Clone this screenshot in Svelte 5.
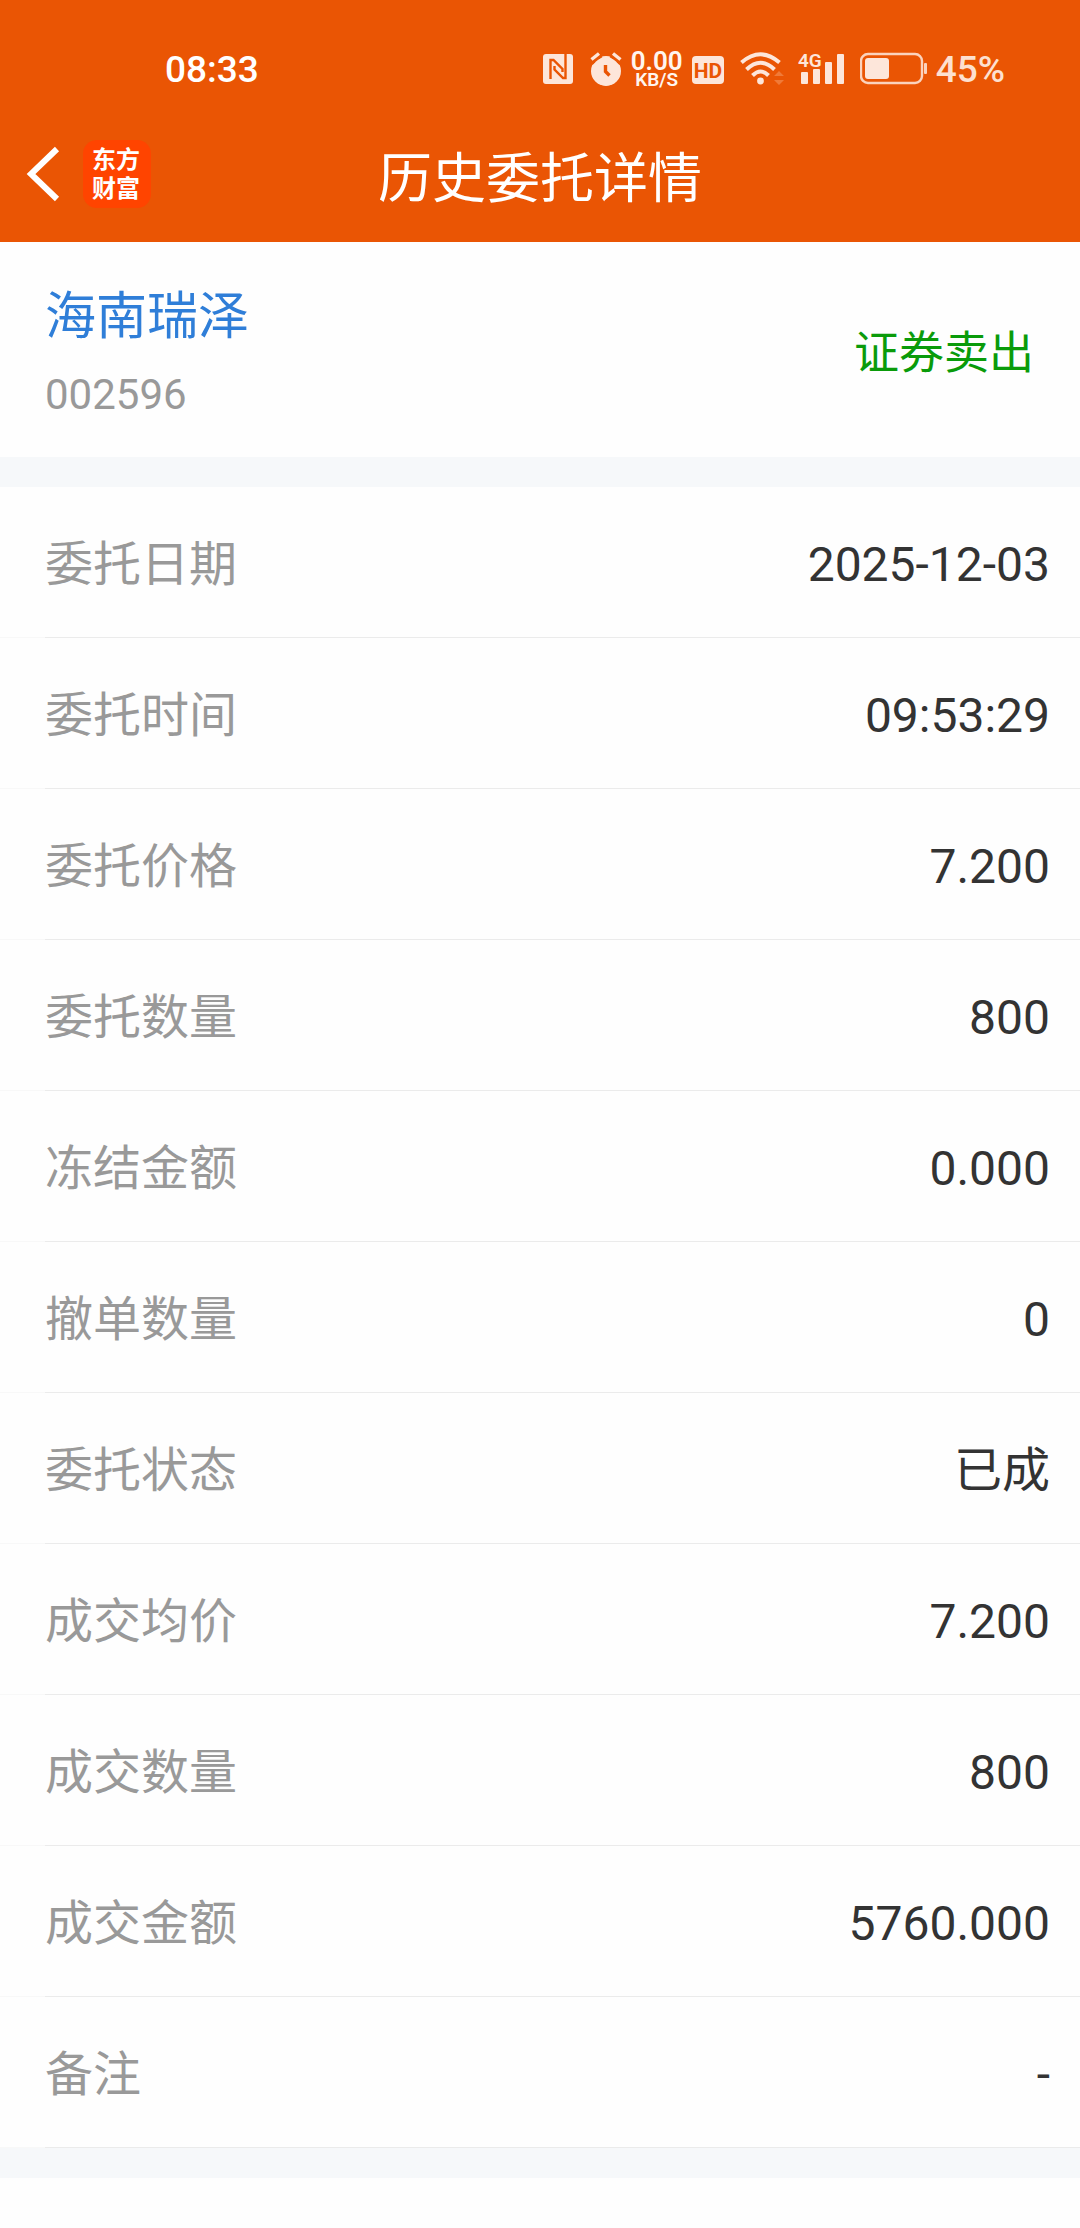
<script>
    const time = "08:33"
    const battery = 45

    const stock = {name: "海南瑞泽", code: "002596", action: "证券卖出"}

    const rows = [
        {label: "委托日期", value: "2025-12-03"},
        {label: "委托时间", value: "09:53:29"},
        {label: "委托价格", value: "7.200"},
        {label: "委托数量", value: "800"},
        {label: "冻结金额", value: "0.000"},
        {label: "撤单数量", value: "0"},
        {label: "委托状态", value: "已成"},
        {label: "成交均价", value: "7.200"},
        {label: "成交数量", value: "800"},
        {label: "成交金额", value: "5760.000"},
        {label: "备注", value: "-"},
    ]
</script>

<header>
    <div class="status">
        <span class="time">{time}</span>
        <div class="indicators">
            <svg width="38" height="36" viewBox="0 0 38 36">
                <rect x="0" y="2" width="30" height="30" rx="3" fill="#fde6da"/>
                <path d="M7.500 27V8H10.500L19.500 17V20" fill="none" stroke="#ea5504" stroke-width="2.400"/>
                <path d="M22.500 2V26H20L11.500 17.500V14" fill="none" stroke="#ea5504" stroke-width="2.400"/>
            </svg>
            <svg width="32" height="36" viewBox="0 0 32 36">
                <circle cx="16" cy="19" r="15" fill="#fde6da"/>
                <path d="M0 10L10 2" stroke="#ea5504" stroke-width="8"/>
                <path d="M32 10L22 2" stroke="#ea5504" stroke-width="8"/>
                <circle cx="16" cy="19.500" r="14" fill="#fde6da"/>
                <path d="M1.500 7.500L9 1.500M30.500 7.500L23 1.500" stroke="#fde6da" stroke-width="3.400"/>
                <path d="M15.500 13V19.500L19.500 23.500" fill="none" stroke="#ea5504" stroke-width="3.400"/>
            </svg>
            <div class="speed">
                <span class="rate">0.00</span>
                <span class="unit">KB/S</span>
            </div>
            <svg width="39" height="36" viewBox="0 0 39 36">
                <rect x="0" y="4" width="32" height="28" rx="4" fill="#fde6da"/>
                <text class="hd" x="16" y="26" text-anchor="middle">HD</text>
            </svg>
            <svg width="49" height="36" viewBox="0 0 49 36">
                <g fill="none" stroke="#fde6da" stroke-width="4">
                    <path d="M1.500 10.500Q20.500 -6 39.500 10.500"/>
                    <path d="M6.500 17.500Q20.500 4 34.500 17.500"/>
                    <path d="M12.500 23.500Q20.500 15.500 28.500 23.500"/>
                </g>
                <circle cx="20.500" cy="29" r="3.400" fill="#fde6da"/>
                <path d="M34 24L39 19L44 24ZM34 28L39 33L44 28Z" fill="#f07a38"/>
            </svg>
            <svg class="signal" width="53" height="36" viewBox="0 0 53 36">
                <g fill="#fde6da">
                    <rect x="3" y="20" width="7" height="12" rx="1"/>
                    <rect x="15" y="17" width="7" height="15" rx="1"/>
                    <rect x="27" y="10" width="7" height="22" rx="1"/>
                    <rect x="39" y="2" width="7" height="30" rx="1"/>
                </g>
                <text class="net" x="0" y="15">4G</text>
            </svg>
            <svg width="67" height="36" viewBox="0 0 67 36">
                <rect x="1" y="2" width="61" height="29" rx="7" fill="none" stroke="#fbd3bd" stroke-width="2.400"/>
                <rect x="5" y="6" width="24" height="21" rx="3" fill="#fde6da"/>
                <rect x="64" y="11" width="3" height="11" rx="1" fill="#fbd3bd"/>
            </svg>
            <span class="battery">{battery}%</span>
        </div>
    </div>
    <nav>
        <div class="left">
            <button class="back" aria-label="返回">
                <svg width="34" height="56" viewBox="0 0 34 56">
                    <path d="M31 3L5 28L31 53" fill="none" stroke="#fff" stroke-width="6"/>
                </svg>
            </button>
            <a class="logo" href="#home"><span>东方</span><span>财富</span></a>
        </div>
        <h1>历史委托详情</h1>
    </nav>
</header>

<main>
    <section class="stock">
        <div>
            <a class="name" href="#stock">{stock.name}</a>
            <div class="code">{stock.code}</div>
        </div>
        <span class="action">{stock.action}</span>
    </section>
    <dl>
        {#each rows as row}
            <div class="row">
                <dt>{row.label}</dt>
                <dd>{row.value}</dd>
            </div>
        {/each}
    </dl>
</main>

<style>
    :global(body) {
        background-color: #fefefe;
        font-family: Roboto, "Noto Sans CJK SC", sans-serif;
    }

    header {
        background-color: #ea5504;
        color: #fff;
    }
    .status {
        display: flex;
        align-items: center;
        justify-content: space-between;
        height: 84px;
        padding: 28px 75px 0 165px;
    }
    .time {
        font-size: 37px;
        font-weight: 500;
        line-height: 44px;
    }
    .indicators {
        display: flex;
        align-items: center;
        gap: 9px;
    }
    .speed {
        display: flex;
        flex-direction: column;
        align-items: center;
        width: 52px;
        color: #fff5ef;
        font-weight: 600;
    }
    .rate {
        font-size: 26px;
        line-height: 20px;
    }
    .unit {
        font-size: 19px;
        line-height: 18px;
    }
    .hd {
        fill: #ea5504;
        font-size: 21px;
        font-weight: 700;
    }
    .signal {
        overflow: visible;
    }
    .net {
        fill: #fde6da;
        font-size: 19px;
        font-weight: 600;
    }
    .battery {
        color: #fde0d0;
        font-size: 37px;
        font-weight: 500;
        line-height: 46px;
    }

    nav {
        display: grid;
        grid-template-columns: 1fr auto 1fr;
        align-items: center;
        height: 130px;
    }
    .left {
        display: flex;
        align-items: center;
        gap: 23px;
        padding: 0 0 6px 26px;
    }
    .back {
        display: flex;
        padding: 0;
        border: 0;
        background: none;
    }
    .logo {
        display: flex;
        flex-direction: column;
        align-items: center;
        box-sizing: border-box;
        width: 68px;
        height: 68px;
        padding: 3px 2px 0 0;
        border-radius: 14px;
        background-color: #ff4400;
        color: #fff;
        font-family: "Noto Sans CJK SC", sans-serif;
        font-size: 24px;
        font-weight: 700;
        line-height: 29px;
        text-decoration: none;
    }
    h1 {
        margin: 0;
        padding-top: 6px;
        font-size: 54px;
        font-weight: 400;
        line-height: 64px;
    }

    .stock {
        display: flex;
        align-items: center;
        justify-content: space-between;
        padding: 41px 46px 32px 45px;
        border-bottom: 30px solid #f6f8fa;
    }
    .name {
        display: block;
        color: #2f7ed8;
        font-size: 51px;
        line-height: 68px;
        text-decoration: none;
    }
    .code {
        padding-top: 14px;
        color: #999;
        font-size: 42px;
        line-height: 60px;
    }
    .action {
        color: #0a9b0a;
        font-size: 45px;
        line-height: 60px;
    }

    dl {
        margin: 0;
        border-bottom: 30px solid #f6f8fa;
    }
    .row {
        display: flex;
        align-items: center;
        justify-content: space-between;
        height: 147px;
        padding: 4px 30px 0 45px;
        background: linear-gradient(to right, #f8f8f8 45px, #ebebeb 45px) bottom / 100% 1px no-repeat;
        font-size: 48px;
        line-height: 60px;
    }
    dt {
        color: #999;
    }
    dd {
        margin: 0;
        color: #333;
    }
</style>
